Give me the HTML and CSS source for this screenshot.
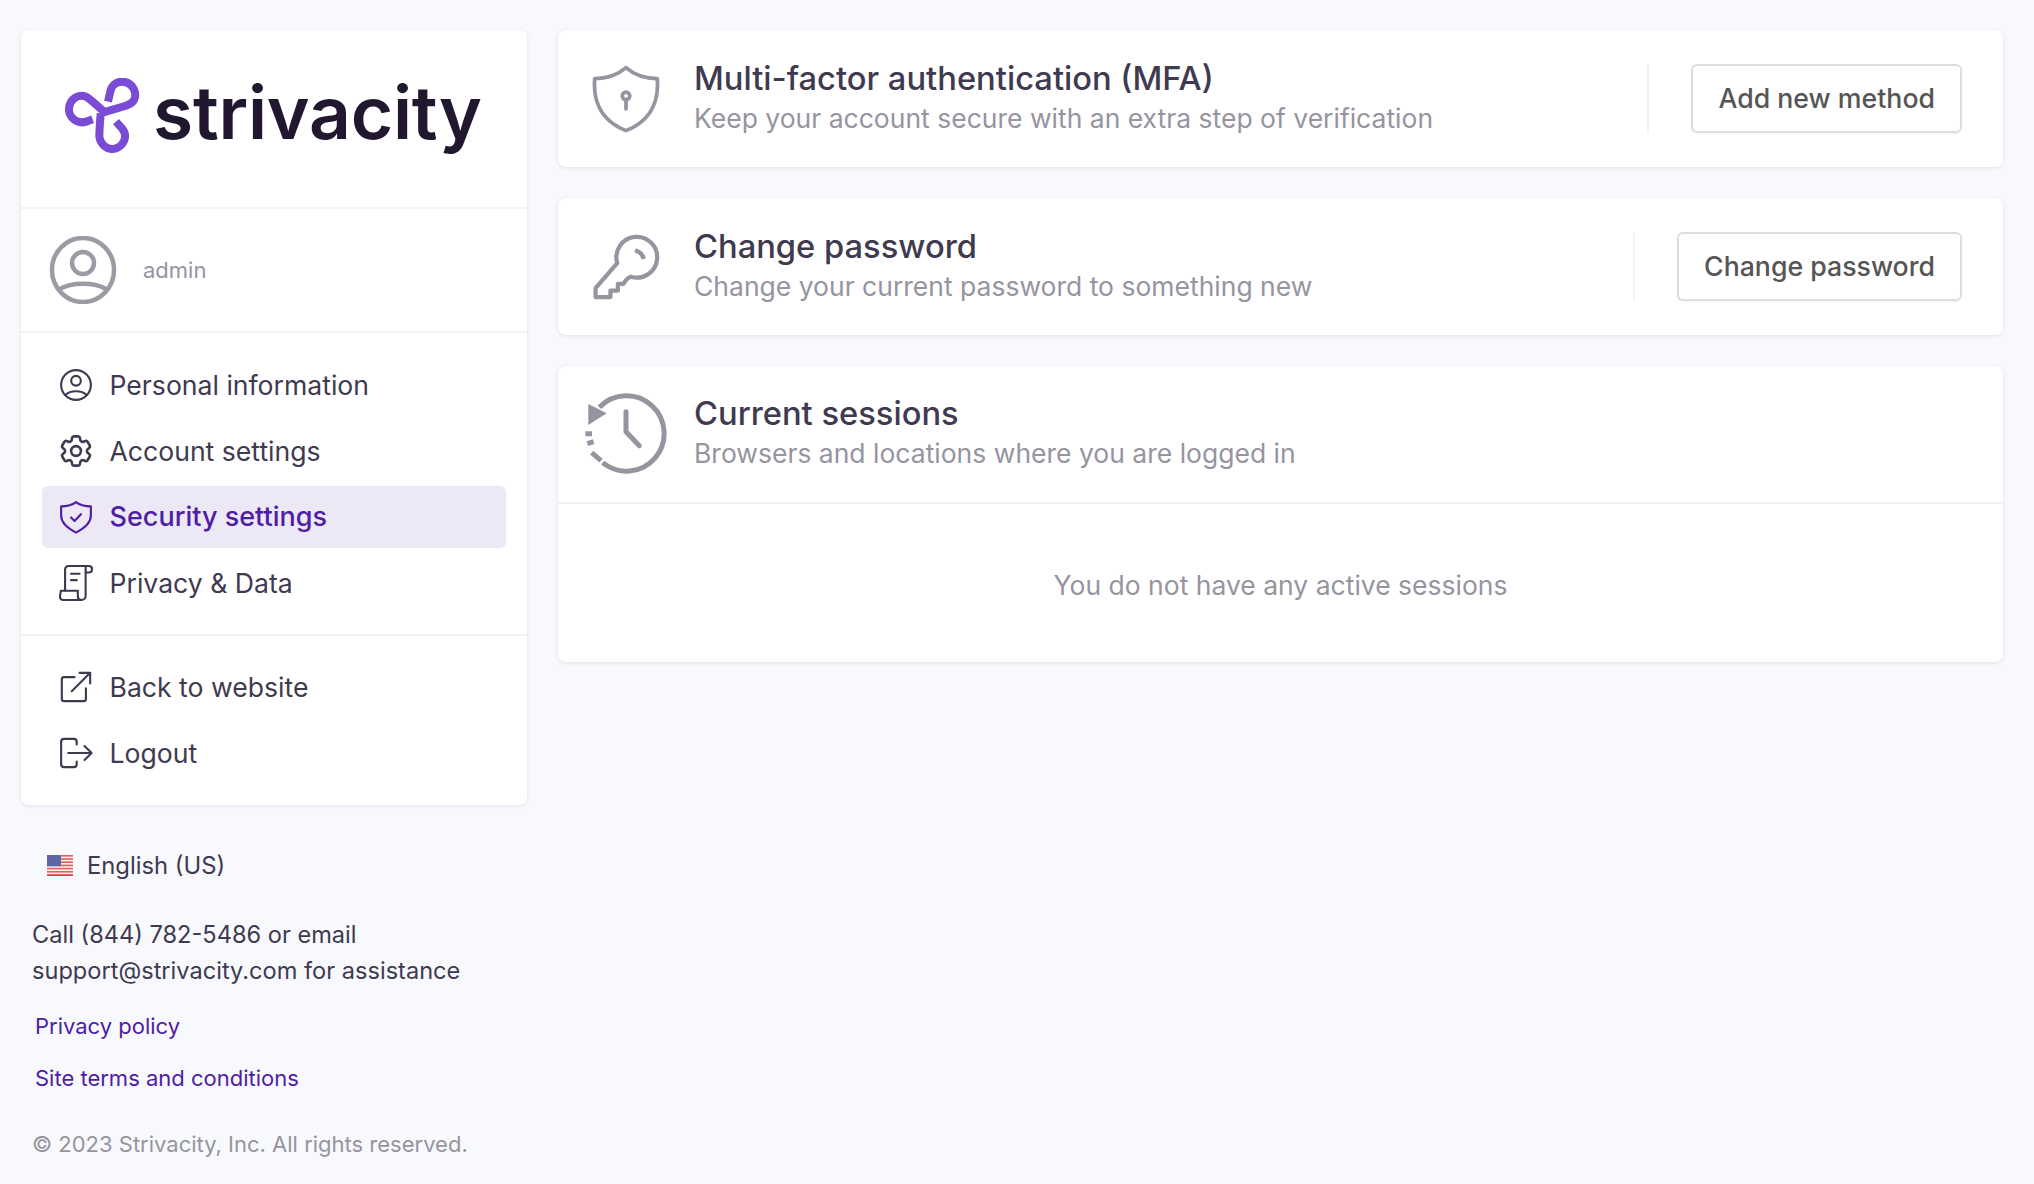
FILE: index.html
```html
<!DOCTYPE html>
<html lang="en">
<head>
  <meta charset="UTF-8" />
  <title>Security settings</title>
  <link rel="stylesheet" href="styles.css">
</head>
<body>
  <div class="layout">
    <div class="side-col">
      <aside class="sidebar">
        <div class="logo-box">
          <svg class="logo-mark" viewBox="45 54 225 225" fill="none" stroke="#7b4bd6" stroke-width="24">
            <path d="M128 178 L108 185 C80 194 55 170 57 145 C59 118 85 100 108 110 C118 114 140 136 162 155"/>
            <path d="M174 125 L182 90 C188 70 208 62 225 66 C250 72 262 100 252 120 C246 132 235 134 225 138 L150 160"/>
            <path d="M198 185 L216 205 C235 228 222 258 195 266 C170 272 150 250 148 230 C148 210 150 185 152 160"/>
          </svg>
          <span class="logo-text">strivacity</span>
        </div>
        <div class="user-box">
          <svg class="avatar" viewBox="0 0 68 68" fill="none" stroke="#9c9aa3" stroke-width="4.500">
            <ellipse cx="34" cy="34" rx="31" ry="32"/>
            <circle cx="34" cy="27" r="11"/>
            <path d="M11 53 C22 46 46 46 57 53"/>
          </svg>
          <span class="user-name">admin</span>
        </div>
        <nav class="nav-group">
          <a class="nav-item">
            <svg class="nav-icon" viewBox="0 0 24 24"><circle cx="12" cy="12" r="10.500"/><circle cx="12" cy="9" r="3.400"/><path d="M4.500 19 C8 15.500 16 15.500 19.500 19"/></svg>
            Personal information
          </a>
          <a class="nav-item">
            <svg class="nav-icon gear" viewBox="0 0 24 24"><path d="M9.594 3.94c.09-.542.56-.94 1.11-.94h2.593c.55 0 1.02.398 1.11.94l.213 1.281c.063.374.313.686.645.87.074.04.147.083.22.127.324.196.72.257 1.075.124l1.217-.456a1.125 1.125 0 011.37.49l1.296 2.247a1.125 1.125 0 01-.26 1.431l-1.003.827c-.293.24-.438.613-.431.992a6.759 6.759 0 010 .255c-.007.378.138.75.43.99l1.005.828c.424.35.534.954.26 1.43l-1.298 2.247a1.125 1.125 0 01-1.369.491l-1.217-.456c-.355-.133-.75-.072-1.076.124a6.57 6.57 0 01-.22.128c-.331.183-.581.495-.644.869l-.213 1.28c-.09.543-.56.941-1.11.941h-2.594c-.55 0-1.02-.398-1.11-.94l-.213-1.281c-.062-.374-.312-.686-.644-.87a6.52 6.52 0 01-.22-.127c-.325-.196-.72-.257-1.076-.124l-1.217.456a1.125 1.125 0 01-1.369-.49l-1.297-2.247a1.125 1.125 0 01.26-1.431l1.004-.827c.292-.24.437-.613.43-.992a6.932 6.932 0 010-.255c.007-.378-.138-.75-.43-.99l-1.004-.828a1.125 1.125 0 01-.26-1.43l1.297-2.247a1.125 1.125 0 011.37-.491l1.216.456c.356.133.751.072 1.076-.124.072-.044.146-.087.22-.128.332-.183.582-.495.644-.869l.214-1.281z"/><circle cx="12" cy="12" r="3"/></svg>
            Account settings
          </a>
          <a class="nav-item active">
            <svg class="nav-icon" viewBox="0 0 24 24"><path d="M12 1.500 C14.500 3.500 17.500 4.500 22.500 4.500 V11 C22.500 16 18 20 12 23 C6 20 1.500 16 1.500 11 V4.500 C6.500 4.500 9.500 3.500 12 1.500Z"/><path d="M8.500 12.300 L11 14.800 L15.500 10"/></svg>
            Security settings
          </a>
          <a class="nav-item">
            <svg class="nav-icon scroll" viewBox="0 0 24 26"><path d="M21 1 H7 C5.300 1 4.300 2 4.300 3.700 V18.500"/><path d="M18.800 1.500 V22 C18.800 23.800 17.500 25 15.800 25"/><path d="M21 1 C22.300 1 23.300 2 23.300 3.300 C23.300 4.600 22.300 5.600 21 5.600 H18.800"/><path d="M8.500 6.500 H14.500 M8.500 11 H12.500"/><path d="M15.800 25 H3 C1.500 25 .7 24 .7 22.700 C.7 21.800 1 21 1.300 18.500 H13.300 V22.500 C13.300 24 14.300 25 15.800 25Z"/></svg>
            Privacy &amp; Data
          </a>
        </nav>
        <nav class="nav-group bottom">
          <a class="nav-item">
            <svg class="nav-icon" viewBox="0 0 24 24"><path d="M11 5 H3.500 C2.500 5 2 5.500 2 6.500 V20.500 C2 21.500 2.500 22 3.500 22 H17.500 C18.500 22 19 21.500 19 20.500 V13"/><path d="M9 15 L22 2 M14.500 2 H22 V9.500"/></svg>
            Back to website
          </a>
          <a class="nav-item">
            <svg class="nav-icon" viewBox="0 0 24 24"><path d="M12.500 6 V4 C12.500 2.800 11.700 2 10.500 2 H3.500 C2.300 2 1.500 2.800 1.500 4 V20 C1.500 21.200 2.300 22 3.500 22 H10.500 C11.700 22 12.500 21.200 12.500 20 V18"/><path d="M6.500 12 H23 M18 7 L23 12 L18 17"/></svg>
            Logout
          </a>
        </nav>
      </aside>

      <div class="lang-row">
        <svg class="flag" viewBox="0 0 26 21">
          <rect width="26" height="21" fill="#f4f0f2"/>
          <rect width="26" height="1.600" fill="#e0635e"/>
          <rect y="3.200" width="26" height="1.600" fill="#e0635e"/>
          <rect y="6.400" width="26" height="1.600" fill="#e0635e"/>
          <rect y="9.600" width="26" height="1.600" fill="#e0635e"/>
          <rect y="12.800" width="26" height="1.600" fill="#e0635e"/>
          <rect y="16" width="26" height="1.600" fill="#e0635e"/>
          <rect y="19.200" width="26" height="1.800" fill="#cf4a45"/>
          <rect width="14" height="11.200" fill="#5e66a8"/>
        </svg>
        English (US)
      </div>
      <p class="contact">Call (844) 782-5486 or email<br />support@strivacity.com for assistance</p>
      <a class="foot-link first">Privacy policy</a>
      <a class="foot-link">Site terms and conditions</a>
      <p class="copyright">© 2023 Strivacity, Inc. All rights reserved.</p>
    </div>

    <main class="main-col">
      <section class="card">
        <div class="card-head">
          <div class="card-icon">
            <svg class="shield-icon" viewBox="130 135 200 200" fill="none" stroke="#96949f" stroke-width="11" stroke-linejoin="round">
              <path d="M230 143 C255 165 285 175 322 175 C326 225 315 295 230 328 C145 295 134 225 138 175 C175 175 205 165 230 143Z"/>
              <circle cx="230" cy="226" r="11"/>
              <path d="M230 236 V264" stroke-linecap="round"/>
            </svg>
          </div>
          <div class="card-text">
            <h2>Multi-factor authentication (MFA)</h2>
            <p>Keep your account secure with an extra step of verification</p>
          </div>
          <div class="card-action"><button>Add new method</button></div>
        </div>
      </section>

      <section class="card">
        <div class="card-head">
          <div class="card-icon">
            <svg class="key-icon" viewBox="125 635 210 210" fill="none" stroke="#96949f" stroke-width="13" stroke-linejoin="round">
              <path d="M203 728 A63 63 0 1 1 245 770 C235 773 228 782 222 792 H205 V813 H182 V833 H136 V805 Z"/>
              <path d="M258 688 C270 692 282 702 285 715"/>
            </svg>
          </div>
          <div class="card-text">
            <h2>Change password</h2>
            <p>Change your current password to something new</p>
          </div>
          <div class="card-action"><button>Change password</button></div>
        </div>
      </section>

      <section class="card">
        <div class="card-head with-line">
          <div class="card-icon">
            <svg class="clock-icon" viewBox="105 120 250 252" fill="none" stroke="#96949f" stroke-width="15">
              <path d="M150 172 A113 113 0 1 1 160 338"/>
              <path d="M108 251 H128 M114 281 L133 275 M127 308 L155 332"/>
              <path d="M230 185 V245 L270 287" stroke-linecap="round" stroke-linejoin="round"/>
              <path d="M117 162 V225 L172 190Z" fill="#96949f" stroke="none"/>
            </svg>
          </div>
          <div class="card-text">
            <h2>Current sessions</h2>
            <p>Browsers and locations where you are logged in</p>
          </div>
        </div>
        <div class="empty-text">You do not have any active sessions</div>
      </section>
    </main>
  </div>
</body>
</html>
```

FILE: styles.css
```css
:root {
  --background: #f8f9fd;
  --card-bg: #ffffff;
  --line: #f3f3f5;
  --text: #3f3a50;
  --muted: #96949f;
  --accent: #4f1da6;
  --accent-bg: #ece8f6;
}
* {
  box-sizing: border-box;
}
html, body {
  margin: 0;
  height: 100%;
}
body {
  font-family: Inter, "Liberation Sans", sans-serif;
  background: var(--background);
  color: var(--text);
  overflow: hidden;
}
.layout {
  display: flex;
  gap: 31px;
  padding: 30px 31px 0 21px;
}
.side-col {
  width: 506px;
  flex: none;
}
.main-col {
  flex: 1;
  display: flex;
  flex-direction: column;
  gap: 31px;
}
.sidebar, .card {
  background: var(--card-bg);
  border-radius: 8px;
  box-shadow: 0 1px 4px rgba(30, 30, 60, 0.1);
}
.sidebar {
  height: 775px;
}
.logo-box {
  height: 179px;
  display: flex;
  align-items: flex-start;
  padding: 48px 0 0 44px;
  border-bottom: 2px solid var(--line);
}
.logo-mark {
  width: 75px;
  height: 75px;
  flex: none;
}
.logo-text {
  font-size: 73px;
  font-weight: 600;
  line-height: 70px;
  margin-left: 13px;
  color: #21182f;
  letter-spacing: -0.2px;
}
.user-box {
  height: 124px;
  display: flex;
  align-items: center;
  padding-left: 28px;
  border-bottom: 2px solid var(--line);
}
.avatar {
  width: 68px;
  height: 68px;
}
.user-name {
  font-size: 22px;
  color: var(--muted);
  margin-left: 26px;
}
.nav-group {
  padding: 21px 21px 20px;
  display: flex;
  flex-direction: column;
  gap: 4px;
}
.nav-group.bottom {
  border-top: 2px solid var(--line);
  padding-top: 20px;
}
.nav-item {
  height: 62px;
  display: flex;
  align-items: center;
  gap: 16.5px;
  padding: 0 0 1px 17px;
  border-radius: 6px;
  font-size: 26.6px;
}
.nav-item.active {
  background: var(--accent-bg);
  color: var(--accent);
  font-size: 27px;
  font-weight: 500;
}
.nav-icon {
  width: 34px;
  height: 34px;
  fill: none;
  stroke: currentColor;
  stroke-width: 1.5;
  stroke-linecap: round;
  stroke-linejoin: round;
  flex: none;
}
.nav-icon.gear {
  stroke-width: 1.6;
  transform: scale(1.15);
}
.nav-icon.scroll {
  height: 38px;
}
.lang-row {
  display: flex;
  align-items: center;
  gap: 14px;
  height: 36px;
  margin-top: 42px;
  padding-left: 26px;
  font-size: 23.8px;
}
.flag {
  width: 26px;
  height: 21px;
}
.contact {
  margin: 34px 0 0 11px;
  font-size: 23.6px;
  line-height: 36px;
}
.foot-link {
  display: block;
  margin: 20px 0 0 14px;
  font-size: 22px;
  line-height: 32px;
  color: var(--accent);
}
.foot-link.first {
  margin-top: 21px;
}
.copyright {
  margin: 34px 0 0 11px;
  font-size: 22px;
  line-height: 32px;
  color: var(--muted);
}
.card-head {
  height: 137px;
  display: flex;
  align-items: center;
  padding: 0 41px 0 26px;
}
.card-head.with-line {
  border-bottom: 2px solid var(--line);
  height: 138px;
}
.card-icon {
  width: 84px;
  margin-right: 26px;
  display: flex;
  justify-content: center;
  flex: none;
}
.shield-icon, .key-icon {
  width: 68px;
  height: 68px;
}
.clock-icon {
  width: 84px;
  height: 84px;
  margin-bottom: 5px;
}
.card-text {
  flex: 1;
  padding-bottom: 2px;
}
.card-text h2 {
  margin: 0;
  font-size: 32.7px;
  font-weight: 500;
  line-height: 40px;
}
.card-text p {
  margin: 0;
  font-size: 26.5px;
  line-height: 40px;
  color: var(--muted);
}
.card-action {
  padding-left: 42px;
  border-left: 2px solid var(--line);
}
.card-action button {
  height: 69px;
  padding: 0 25px 2px;
  border: 2px solid #dedede;
  border-radius: 6px;
  background: #fff;
  color: #555555;
  font-family: inherit;
  font-size: 26.7px;
  font-weight: 500;
  box-shadow: 0 1px 2px rgba(0, 0, 0, 0.06);
}
.empty-text {
  height: 158px;
  padding-top: 4px;
  display: flex;
  align-items: center;
  justify-content: center;
  font-size: 26.5px;
  color: var(--muted);
}
```
